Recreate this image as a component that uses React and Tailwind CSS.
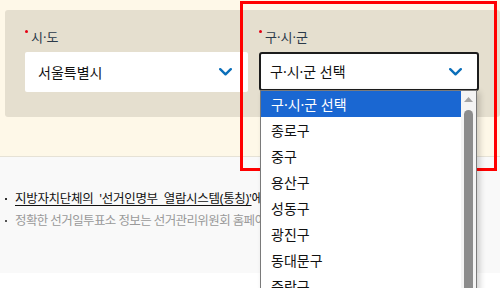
import React from "react";

const font = "font-['Noto_Sans','Noto_Sans_CJK_KR',sans-serif]";

// Blue chevron used by both selects
const Chevron = () => (
  <svg width="13" height="8" viewBox="0 0 13 8" fill="none">
    <path d="M1.2 1.2 L6.5 6.3 L11.8 1.2" stroke="#0b6fba" strokeWidth="2.4" strokeLinecap="round" strokeLinejoin="round" />
  </svg>
);

const Label = ({ children }) => (
  <div className="relative h-[20px] pl-[6px] text-[13px] leading-[20px] text-[#2b3a4a]">
    <span className="absolute left-0 top-[3px] h-[3px] w-[3px] rounded-full bg-[#e60012]" />
    {children}
  </div>
);

const items = ["구·시·군 선택", "종로구", "중구", "용산구", "성동구", "광진구", "동대문구", "중랑구"];

export default function App() {
  return (
    <div className={`relative h-[288px] w-[500px] overflow-hidden bg-white ${font}`}>
      {/* Top search panel */}
      <div className="h-[156px] bg-[#fef8e8] pl-[5px] pt-[10px]">
        <div className="flex h-[107px] gap-[11px] rounded-[3px] bg-[#e5dfcf] pl-[20px] pr-[21px] pt-[17px]">
          <div className="w-[223px]">
            <Label>시·도</Label>
            <div className="mt-[5px] flex h-[40px] items-center justify-between rounded-[2px] bg-white pl-[13px] pr-[16px] text-[14px] text-[#111]">
              <span>서울특별시</span>
              <Chevron />
            </div>
          </div>
          <div className="w-[220px]">
            <Label>구·시·군</Label>
            <div className="mt-[5px] flex h-[39px] items-center justify-between rounded-[3px] border-2 border-[#1c1c1c] bg-white pl-[9px] pr-[15px] text-[14px] text-[#111]">
              <span>구·시·군 선택</span>
              <Chevron />
            </div>
          </div>
        </div>
      </div>

      {/* Notice list */}
      <div className="h-[117px] border-t border-[#e6e2d6] bg-[#f9f9f9] pl-[5px] pt-[31px]">
        <div className="flex h-[22px] items-center gap-[8px] whitespace-nowrap text-[12.5px] tracking-[-0.3px] text-[#111]">
          <span className="h-[2px] w-[2px] shrink-0 bg-[#333]" />
          <span>
            <span className="underline underline-offset-[2px]">지방자치단체의 &nbsp;'선거인명부 &nbsp;열람시스템(통칭)'</span>
            에서 확인할 수 있으나 일부 자치단체가 제외
          </span>
        </div>
        <div className="flex h-[22px] items-center gap-[8px] whitespace-nowrap text-[12.5px] tracking-[-0.6px] text-[#9a9a9a]">
          <span className="h-[2px] w-[2px] shrink-0 bg-[#555]" />
          <span>정확한 선거일투표소 정보는 선거관리위원회 홈페이지에서 꼭 한번 확인하시기 바랍니다</span>
        </div>
      </div>

      {/* Red highlight box */}
      <div className="absolute left-[240px] top-[1px] h-[170px] w-[257px] border-[3px] border-[#ff0000]" />

      {/* Open dropdown list */}
      <div className="absolute left-[260px] top-[90px] flex h-[210px] w-[217px] border border-[#7a7a7a] bg-white shadow-[3px_2px_6px_rgba(0,0,0,0.18)]">
        <ul className="w-[201px] text-[14px] text-[#111]">
          {items.map((it, i) => (
            <li
              key={it}
              className={`flex h-[26px] items-center pl-[10px] ${i === 0 ? "bg-[#1a67d2] text-white" : ""}`}
            >
              {it}
            </li>
          ))}
        </ul>
        <div className="flex w-[15px] flex-col items-center bg-[#f4f4f4]">
          <svg width="9" height="5" viewBox="0 0 9 5" className="mt-[6px]">
            <path d="M0 5 L4.5 0 L9 5 Z" fill="#a3a3a3" />
          </svg>
          <div className="mt-[8px] w-[9px] flex-1 rounded-t-full bg-[#8c8c8c]" />
        </div>
      </div>
    </div>
  );
}
